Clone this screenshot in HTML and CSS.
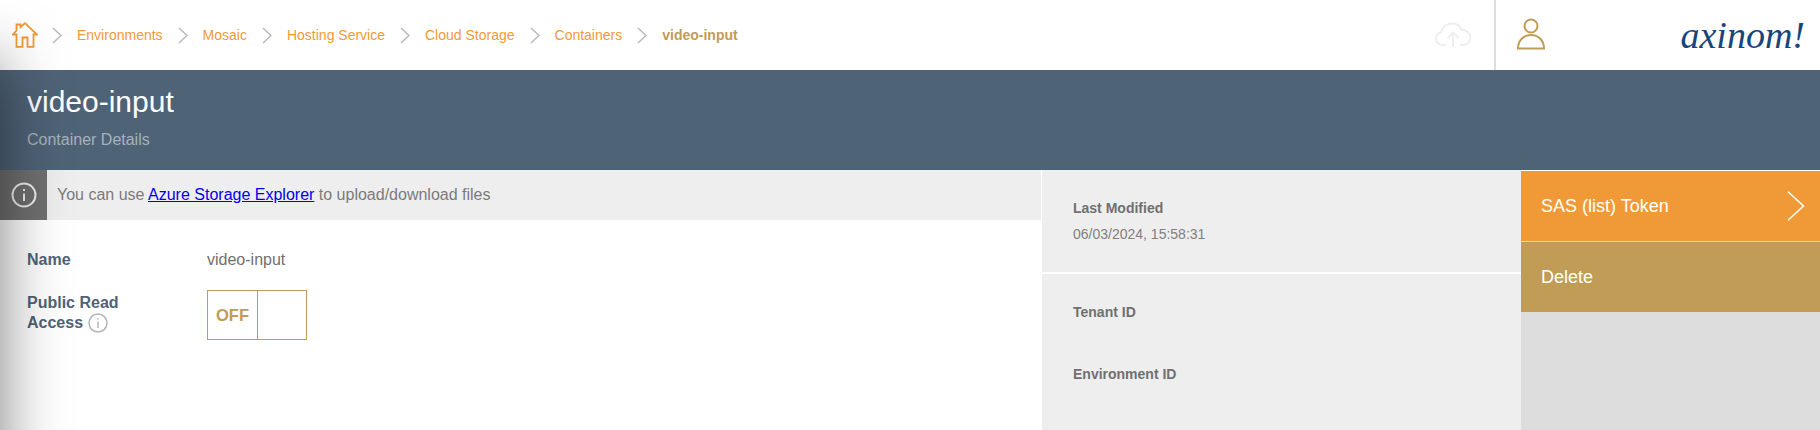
FILE: index.html
```html
<!DOCTYPE html>
<html>
<head>
    <title>video-input</title>
    <link rel="stylesheet" href="styles.css">
</head>
<body>
    <!-- Top bar -->
    <header class="topbar">
        <nav class="crumbs">
            <svg class="home-icon" width="26" height="26" viewBox="0 0 26 26" fill="none" stroke="#f09a37" stroke-width="1.8">
                <path d="M4.500 8.500V2.500H8.500V5L13 1.200 25 12.500H21.500V24.800H15.500V15.500H10.500V24.800H4.500V12.500H1Z"/>
            </svg>
            <svg class="sep" width="10" height="17" viewBox="0 0 10 17"><path d="M1 1l8 7.500L1 16"/></svg>
            <a class="crumb">Environments</a>
            <svg class="sep" width="10" height="17" viewBox="0 0 10 17"><path d="M1 1l8 7.500L1 16"/></svg>
            <a class="crumb">Mosaic</a>
            <svg class="sep" width="10" height="17" viewBox="0 0 10 17"><path d="M1 1l8 7.500L1 16"/></svg>
            <a class="crumb">Hosting Service</a>
            <svg class="sep" width="10" height="17" viewBox="0 0 10 17"><path d="M1 1l8 7.500L1 16"/></svg>
            <a class="crumb">Cloud Storage</a>
            <svg class="sep" width="10" height="17" viewBox="0 0 10 17"><path d="M1 1l8 7.500L1 16"/></svg>
            <a class="crumb">Containers</a>
            <svg class="sep" width="10" height="17" viewBox="0 0 10 17"><path d="M1 1l8 7.500L1 16"/></svg>
            <span class="crumb current">video-input</span>
        </nav>
        <svg class="cloud-icon" width="38" height="26" viewBox="0 0 38 26" fill="none" stroke="#eeeeee" stroke-width="2">
            <path d="M12 23H8a6.500 6.500 0 0 1-1-12.800C8 5 13 1.500 18 1.500c4.500 0 8 2.500 9.500 6.500a7.500 7.500 0 0 1 2.500 15h-4"/>
            <path d="M19 25V11M13.500 16 19 10.500l5.500 5.500"/>
        </svg>
        <div class="user-box">
            <svg class="user-icon" width="28" height="32" viewBox="0 0 28 32" fill="none" stroke="#c19c56" stroke-width="2">
                <circle cx="14" cy="8" r="6.500"/>
                <path d="M1 30.500C1 22 7 17 14 17s13 5 13 13.500z"/>
            </svg>
            <span class="logo">axinom!</span>
        </div>
    </header>

    <!-- Title -->
    <section class="title-bar">
        <h1>video-input</h1>
        <p>Container Details</p>
    </section>

    <main class="content">
        <div class="left-col">
            <div class="info-bar">
                <div class="info-box">
                    <svg width="26" height="26" viewBox="0 0 26 26" fill="none" stroke="#eeeeee" stroke-width="2">
                        <circle cx="13" cy="13" r="11.500"/>
                        <path d="M13 11.500V19M13 7v2"/>
                    </svg>
                </div>
                <p>You can use <a href="#">Azure Storage Explorer</a> to upload/download files</p>
            </div>
            <div class="form">
                <div class="form-row">
                    <label>Name</label>
                    <span class="value">video-input</span>
                </div>
                <div class="form-row">
                    <label class="two-lines">Public Read Access
                        <svg class="hint" width="20" height="20" viewBox="0 0 20 20" fill="none" stroke="#b5b5b5" stroke-width="1.500">
                            <circle cx="10" cy="10" r="9"/>
                            <path d="M10 8.500V15M10 5v1.500"/>
                        </svg>
                    </label>
                    <div class="toggle">
                        <span class="toggle-text">OFF</span>
                        <span class="toggle-empty"></span>
                    </div>
                </div>
            </div>
        </div>

        <div class="details">
            <div class="details-box first">
                <h4>Last Modified</h4>
                <p>06/03/2024, 15:58:31</p>
            </div>
            <div class="details-box second">
                <h4>Tenant ID</h4>
                <h4>Environment ID</h4>
            </div>
        </div>

        <div class="actions">
            <button class="action orange">SAS (list) Token
                <svg width="18" height="30" viewBox="0 0 18 30" fill="none" stroke="#ffffff" stroke-width="1.500"><path d="M1 .7 16.500 15 1 29.300"/></svg>
            </button>
            <button class="action gold">Delete</button>
        </div>
    </main>

    <div class="left-shadow"></div>
</body>
</html>
```

FILE: styles.css
```css
* {
    box-sizing: border-box;
}

html, body {
    height: 100%;
}

body {
    margin: 0;
    font-family: "Liberation Sans", Arial, sans-serif;
    overflow: hidden;
    display: flex;
    flex-direction: column;
    background-color: white;
}

/* top bar */
.topbar {
    height: 70px;
    display: flex;
    align-items: center;
    flex-shrink: 0;
}

.crumbs {
    display: flex;
    align-items: center;
    padding-left: 12px;
    flex: 1;
}

.home-icon {
    margin-right: -1px;
}

.sep {
    margin: 0 15px;
    fill: none;
    stroke: #b9b9b9;
    stroke-width: 1.5;
}

.crumb {
    font-size: 14px;
    color: #f09a37;
}

.current {
    font-weight: bold;
    color: #c19c56;
}

.cloud-icon {
    margin-right: 22px;
}

.user-box {
    width: 326px;
    height: 70px;
    border-left: 2px solid #dddddd;
    display: flex;
    align-items: center;
    justify-content: space-between;
    padding: 0 15px 0 21px;
}

.user-icon {
    margin-top: -2px;
}

.logo {
    font-family: "Liberation Serif", serif;
    font-style: italic;
    font-size: 38px;
    color: #17457c;
}

/* title */
.title-bar {
    height: 100px;
    flex-shrink: 0;
    background-color: #4f6377;
    padding: 14px 27px 0;
}

.title-bar h1 {
    margin: 0;
    font-size: 30px;
    font-weight: normal;
    line-height: 36px;
    color: white;
}

.title-bar p {
    margin: 11px 0 0;
    font-size: 16px;
    line-height: 18px;
    color: #a7b1bb;
}

/* content */
.content {
    flex: 1;
    display: flex;
}

.left-col {
    width: 1041px;
}

.info-bar {
    height: 50px;
    display: flex;
    align-items: center;
    background-color: #eeeeee;
}

.info-bar p {
    margin: 0 0 0 10px;
    font-size: 16px;
    color: #7a7a7a;
}

.info-box {
    width: 47px;
    height: 50px;
    background-color: #707070;
    display: flex;
    align-items: center;
    justify-content: center;
}

.form {
    padding: 30px 27px;
}

.form-row {
    display: flex;
    margin-bottom: 20px;
}

.form-row label {
    width: 180px;
    font-size: 16px;
    font-weight: bold;
    line-height: 20px;
    color: #4f6377;
    padding-right: 60px;
}

.form-row .two-lines {
    padding-top: 3px;
}

.hint {
    vertical-align: -5px;
}

.value {
    font-size: 16px;
    line-height: 20px;
    color: #707070;
}

.toggle {
    width: 100px;
    height: 50px;
    display: flex;
    border: 1px solid #c19c56;
}

.toggle-text {
    width: 50px;
    border-right: 1px solid #c19c56;
    font-size: 16.500px;
    font-weight: bold;
    color: #c19c56;
    text-align: center;
    line-height: 48px;
}

.details {
    margin-left: 1px;
    width: 479px;
    display: flex;
    flex-direction: column;
    gap: 2px;
}

.details-box {
    background-color: #eeeeee;
    padding: 29px 31px 0;
}

.first {
    height: 102px;
}

.second {
    flex: 1;
}

.details-box h4 {
    margin: 0;
    font-size: 14px;
    line-height: 18px;
    color: #707070;
}

.second h4 {
    margin-bottom: 44px;
}

.details-box p {
    margin: 8px 0 0;
    font-size: 14px;
    line-height: 18px;
    color: #808080;
}

.actions {
    flex: 1;
    background-color: #dddddd;
}

.action {
    display: flex;
    align-items: center;
    justify-content: space-between;
    width: 100%;
    height: 70px;
    border: none;
    padding: 0 15px 0 20px;
    font-family: inherit;
    font-size: 18px;
    color: white;
    text-align: left;
}

.orange {
    height: 71px;
    border-top: 1px solid white;
    background-color: #f09a37;
    margin-bottom: 1px;
}

.gold {
    background-color: #c19c56;
}

/* shadow from the menu that sits off screen on the left */
.left-shadow {
    position: absolute;
    top: 62px;
    left: -100px;
    bottom: -100px;
    width: 100px;
    box-shadow: 0 0 65px rgba(0, 0, 0, 0.5);
    pointer-events: none;
}
```
